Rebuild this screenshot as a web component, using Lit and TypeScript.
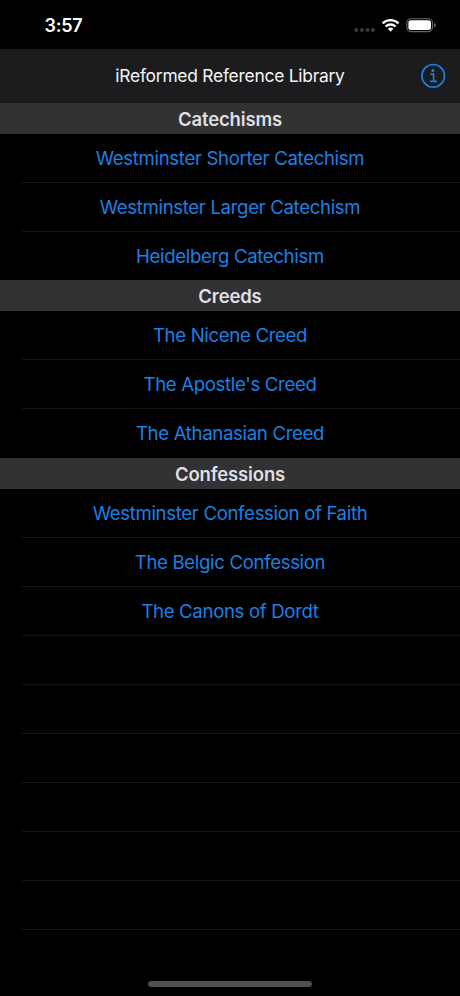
import { LitElement, html, css, svg } from "lit";
import { customElement } from "lit/decorators.js";

interface Section {
  title: string;
  items: string[];
}

const SECTIONS: Section[] = [
  {
    title: "Catechisms",
    items: ["Westminster Shorter Catechism", "Westminster Larger Catechism", "Heidelberg Catechism"],
  },
  {
    title: "Creeds",
    items: ["The Nicene Creed", "The Apostle's Creed", "The Athanasian Creed"],
  },
  {
    title: "Confessions",
    items: ["Westminster Confession of Faith", "The Belgic Confession", "The Canons of Dordt"],
  },
];

const EMPTY_ROWS = 6;

@customElement("status-bar")
class StatusBar extends LitElement {
  static styles = css`
    :host {
      display: flex;
      justify-content: space-between;
      height: 49px;
      box-sizing: border-box;
      padding: 14px 24px 0 44.5px;
      background: #000;
    }
    .time {
      font-size: 18px;
      line-height: 24px;
      font-weight: 600;
      letter-spacing: -0.25px;
      color: #fff;
    }
    svg {
      display: block;
    }
  `;
  render() {
    return html`
      <span class="time">3:57</span>
      <svg width="84" height="24" viewBox="352 14 84 24">
        <g fill="#3b3b3d">
          ${[356.3, 362, 367.5, 373].map((x) => svg`<circle cx=${x} cy="30" r="2"></circle>`)}
        </g>
        <g fill="none" stroke="#fff" stroke-width="2.3">
          <path d="M382.6 23.3 A11.6 11.6 0 0 1 398.6 23.3"></path>
          <path d="M385.6 26.5 A7.2 7.2 0 0 1 395.6 26.5"></path>
        </g>
        <path fill="#fff" d="M387.8 28.8 A4.2 4.2 0 0 1 393.4 28.8 L390.6 31.8 Z"></path>
        <rect x="406.9" y="18.8" width="25.6" height="12.8" rx="4" fill="none" stroke="#68686a" stroke-width="1.1"></rect>
        <rect x="408.4" y="20.3" width="22.6" height="9.8" rx="2.5" fill="#fff"></rect>
        <path d="M434 23 a2.4 2.4 0 0 1 0 4.6z" fill="#68686a"></path>
      </svg>
    `;
  }
}

@customElement("nav-bar")
class NavBar extends LitElement {
  static styles = css`
    :host {
      display: grid;
      grid-template-columns: 54px 1fr 54px;
      align-items: center;
      height: 54px;
      background: #1c1c1e;
    }
    .title {
      grid-column: 2;
      text-align: center;
      font-size: 17.4px;
      line-height: 24px;
      letter-spacing: -0.24px;
      color: #f5f5f5;
      white-space: nowrap;
    }
    svg {
      display: block;
      margin-left: 14px;
    }
  `;
  render() {
    return html`
      <span class="title">iReformed Reference Library</span>
      <svg width="26" height="26" viewBox="0 0 26 26" fill="none" stroke="#1c80e2">
        <circle cx="13.2" cy="12.8" r="11.3" stroke-width="1.7"></circle>
        <circle cx="12.9" cy="7.4" r="1.5" fill="#1c80e2" stroke="none"></circle>
        <path d="M10.5 11.1 H13.6 V18.4 M10.1 18.4 H17" stroke-width="1.6"></path>
      </svg>
    `;
  }
}

@customElement("library-list")
class LibraryList extends LitElement {
  static styles = css`
    :host {
      display: block;
    }
    .header {
      height: 31px;
      line-height: 32px;
      background: #323234;
      color: #dfdfe1;
      font-size: 18.5px;
      font-weight: 600;
      letter-spacing: -0.15px;
      text-align: center;
    }
    .row {
      box-sizing: border-box;
      height: 49px;
      margin-left: 22px;
      padding-right: 22px;
      border-bottom: 1px solid #161617;
      line-height: 49.8px;
      text-align: center;
      font-size: 18.6px;
      letter-spacing: -0.33px;
      color: #1c80e4;
      white-space: nowrap;
    }
    .row.last {
      height: 48.4px;
      border-bottom-color: transparent;
    }
  `;
  render() {
    return html`
      ${SECTIONS.map(
        (section, s) => html`
          <div class="header">${section.title}</div>
          ${section.items.map(
            (item, i) => html`<div
              class=${i === section.items.length - 1 && s < SECTIONS.length - 1 ? "row last" : "row"}
            >${item}</div>`,
          )}
        `,
      )}
      ${Array.from({ length: EMPTY_ROWS }, () => html`<div class="row"></div>`)}
    `;
  }
}

@customElement("app-root")
class AppRoot extends LitElement {
  static styles = css`
    :host {
      display: flex;
      flex-direction: column;
      height: 996px;
      overflow: hidden;
      background: #000;
      font-family: Inter, "Liberation Sans", sans-serif;
    }
    .indicator {
      width: 164px;
      height: 5.5px;
      margin: auto auto 9.5px;
      border-radius: 3px;
      background: #505050;
    }
  `;
  render() {
    return html`
      <status-bar></status-bar>
      <nav-bar></nav-bar>
      <library-list></library-list>
      <div class="indicator"></div>
    `;
  }
}
